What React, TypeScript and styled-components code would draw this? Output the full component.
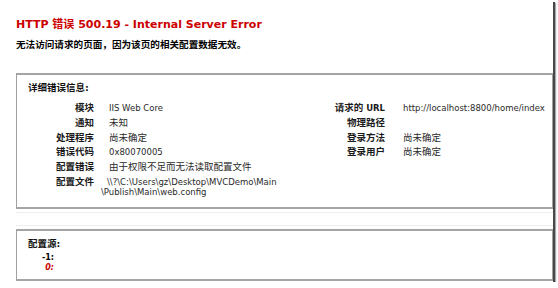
import React from 'react';
import styled, { createGlobalStyle } from 'styled-components';

const GlobalStyle = createGlobalStyle`
  html, body {
    margin: 0;
    padding: 0;
    background: #fff;
  }
  body {
    font-family: "DejaVu Sans", "Noto Sans CJK SC", sans-serif;
    color: #000;
  }
`;

// the whole page, cut off like a screenshot with a drop shadow
const Frame = styled.div`
  width: 553px;
  height: 282px;
  box-sizing: border-box;
  padding-left: 16px;
  background: #fff;
  overflow: hidden;
  box-shadow: 2px 2px 0 #474747, 3px 3px 1px #a8a8a8;
`;

const Title = styled.h2`
  margin: 18px 0 0;
  font-size: 11px;
  line-height: 14px;
  font-weight: bold;
  color: #cc0000;
  white-space: nowrap;
`;

const Subtitle = styled.h3`
  margin: 7px 0 0;
  font-size: 9.6px;
  line-height: 12px;
  font-weight: bold;
  color: #000;
`;

const Box = styled.fieldset<{ $top: number; $pad: string }>`
  margin: ${p => p.$top}px 0 0;
  padding: ${p => p.$pad};
  border: none;
  border-top: 2px solid #a4a4a4;
  border-left: 1px solid #a0a0a0;
  border-bottom: 2px solid #a4a4a4;
  border-right: 1px solid #a0a0a0;
  min-width: 0;
`;

// a collapsed section between the two boxes, only its faint outline shows
const Collapsed = styled.div`
  margin-top: 3px;
  height: 12px;
  border-top: 1px solid #eeeeee;
  border-bottom: 1px solid #eeeeee;
`;

const Legend = styled.div`
  font-size: 9.5px;
  line-height: 12px;
  font-weight: bold;
  color: #111;
`;

const Details = styled.div`
  display: flex;
  margin-top: 9px;
`;

const Column = styled.div<{ $width: number; $label: number; $gap: number }>`
  width: ${p => p.$width}px;
  flex: none;
  display: grid;
  grid-template-columns: ${p => p.$label}px 1fr;
  column-gap: ${p => p.$gap}px;
  row-gap: 4.3px;
  align-content: start;
`;

const Label = styled.div`
  text-align: right;
  font-size: 9.5px;
  line-height: 10.5px;
  font-weight: bold;
  color: #1a1a1a;
  white-space: nowrap;
`;

const Value = styled.div`
  font-size: 9.5px;
  line-height: 10.5px;
  color: #2a2a2a;
  white-space: nowrap;
`;

// the config path wraps back a few pixels left of the value column
const PathValue = styled(Value)`
  margin-left: -8px;
  text-indent: 6px;
`;

const Latin = styled.span`
  font-family: "DejaVu Sans", sans-serif;
  font-size: 8.5px;
`;

const SourceList = styled.div`
  margin-top: 3px;
  width: 26px;
  text-align: right;
  font-size: 8px;
  line-height: 9.8px;
  font-weight: bold;
`;

const SourceLine = styled.div<{ $hit?: boolean }>`
  color: ${p => (p.$hit ? '#cc0000' : '#000')};
  font-style: ${p => (p.$hit ? 'italic' : 'normal')};
`;

// Latin runs are set a little smaller than the Chinese ones, as in the page
const mixed = (s: string) =>
  s.split(/([\u3000-\u9fff\uff00-\uffef]+)/).map((part, i) =>
    /[\u3000-\u9fff\uff00-\uffef]/.test(part) ? part : part ? <Latin key={i}>{part}</Latin> : null
  );

const leftRows: [string, string][] = [
  ['模块', 'IIS Web Core'],
  ['通知', '未知'],
  ['处理程序', '尚未确定'],
  ['错误代码', '0x80070005'],
  ['配置错误', '由于权限不足而无法读取配置文件'],
];

const rightRows: [string, string][] = [
  ['请求的 URL', 'http://localhost:8800/home/index'],
  ['物理路径', ''],
  ['登录方法', '尚未确定'],
  ['登录用户', '尚未确定'],
];

export default function App() {
  return (
    <>
      <GlobalStyle />
      <Frame>
        <Title>HTTP 错误 500.19 - Internal Server Error</Title>
        <Subtitle>无法访问请求的页面，因为该页的相关配置数据无效。</Subtitle>

        <Box $top={22} $pad="7px 0 9px 11px">
          <Legend>详细错误信息:</Legend>
          <Details>
            <Column $width={272} $label={66} $gap={15}>
              {leftRows.map(([label, value]) => (
                <React.Fragment key={label}>
                  <Label>{mixed(label)}</Label>
                  <Value>{mixed(value)}</Value>
                </React.Fragment>
              ))}
              <Label>配置文件</Label>
              <PathValue>
                <Latin>\\?\C:\Users\gz\Desktop\MVCDemo\Main</Latin>
                <br />
                <Latin>\Publish\Main\web.config</Latin>
              </PathValue>
            </Column>
            <Column $width={260} $label={85} $gap={18}>
              {rightRows.map(([label, value]) => (
                <React.Fragment key={label}>
                  <Label>{mixed(label)}</Label>
                  <Value>{value ? mixed(value) : '\u00a0'}</Value>
                </React.Fragment>
              ))}
            </Column>
          </Details>
        </Box>

        <Collapsed />

        <Box $top={3} $pad="7px 0 6px 11px">
          <Legend>配置源:</Legend>
          <SourceList>
            <SourceLine>-1:</SourceLine>
            <SourceLine $hit>0:</SourceLine>
          </SourceList>
        </Box>
      </Frame>
    </>
  );
}
